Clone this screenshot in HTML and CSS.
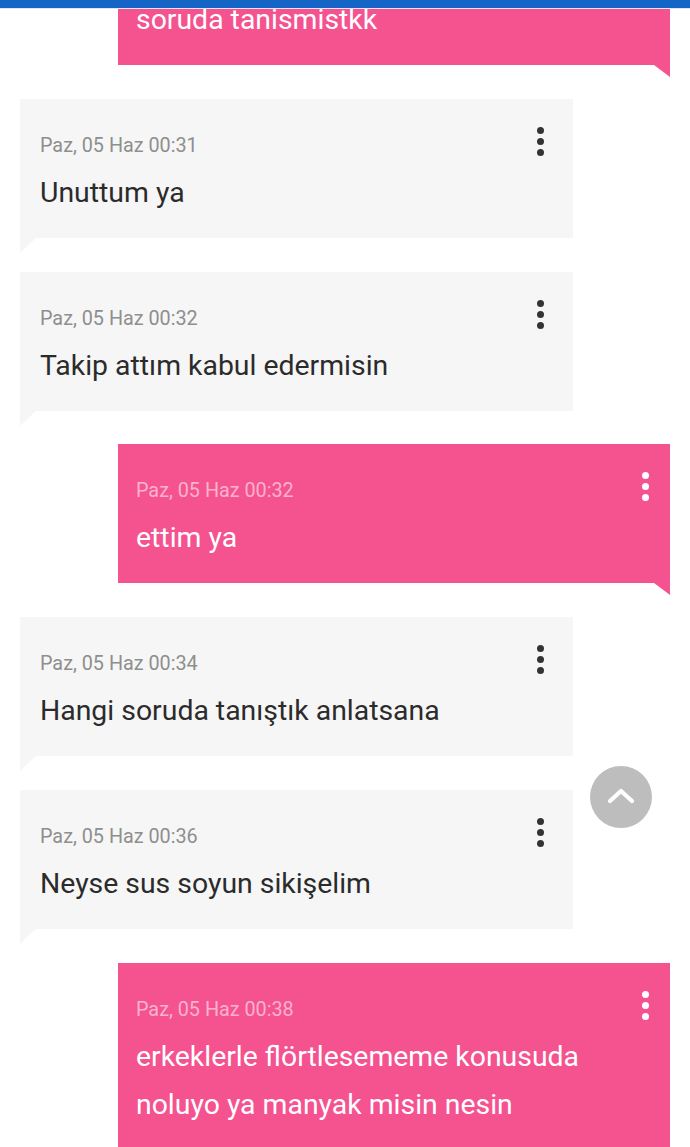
FILE: index.html
```html
<!DOCTYPE html>
<html lang="tr">
<head>
<meta charset="utf-8">
<title>Mesajlar</title>
<link rel="stylesheet" href="styles.css">
</head>
<body>
<div class="topbar"></div>
<main class="thread">
  <div class="msg mine first">
    <div class="meta">Paz, 05 Haz 00:30</div>
    <div class="text">soruda tanismistkk</div>
    <span class="dots"><i></i><i></i><i></i></span>
  </div>
  <div class="msg theirs">
    <div class="meta">Paz, 05 Haz 00:31</div>
    <div class="text">Unuttum ya</div>
    <span class="dots"><i></i><i></i><i></i></span>
  </div>
  <div class="msg theirs">
    <div class="meta">Paz, 05 Haz 00:32</div>
    <div class="text">Takip attım kabul edermisin</div>
    <span class="dots"><i></i><i></i><i></i></span>
  </div>
  <div class="msg mine">
    <div class="meta">Paz, 05 Haz 00:32</div>
    <div class="text">ettim ya</div>
    <span class="dots"><i></i><i></i><i></i></span>
  </div>
  <div class="msg theirs">
    <div class="meta">Paz, 05 Haz 00:34</div>
    <div class="text">Hangi soruda tanıştık anlatsana</div>
    <span class="dots"><i></i><i></i><i></i></span>
  </div>
  <div class="msg theirs">
    <div class="meta">Paz, 05 Haz 00:36</div>
    <div class="text">Neyse sus soyun sikişelim</div>
    <span class="dots"><i></i><i></i><i></i></span>
  </div>
  <div class="msg mine">
    <div class="meta">Paz, 05 Haz 00:38</div>
    <div class="text">erkeklerle flörtlesememe konusuda noluyo ya manyak misin nesin</div>
    <span class="dots"><i></i><i></i><i></i></span>
  </div>
</main>
<button class="to-top" aria-label="Yukarı">
  <svg width="28" height="16" viewBox="0 0 28 16"><path d="M3 13 L14 3 L25 13" fill="none" stroke="#fff" stroke-width="4.2" stroke-linecap="round" stroke-linejoin="round"/></svg>
</button>
</body>
</html>
```

FILE: styles.css
```css
html, body {
  margin: 0;
  padding: 0;
  background: #fff;
  overflow: hidden;
  height: 1147px;
}
body {
  font-family: Roboto, "Noto Sans", "Liberation Sans", sans-serif;
  position: relative;
}
.topbar {
  position: fixed;
  top: 0;
  left: 0;
  right: 0;
  height: 8px;
  background: #1565c6;
  border-bottom: 1px solid #dbe7f5;
  z-index: 5;
}
.thread {
  display: flex;
  flex-direction: column;
  gap: 33.8px;
  padding: 0;
}
.msg {
  position: relative;
  box-sizing: border-box;
  min-height: 139px;
  padding: 33px 60px 21px 20px;
}
.msg.first {
  margin-top: -74px;
}
.msg.theirs {
  margin-left: 20px;
  width: 553px;
  background: #f6f6f6;
}
.msg.mine {
  margin-left: 118px;
  width: 552px;
  background: #f55290;
  padding-left: 18px;
}
.msg::after {
  content: "";
  position: absolute;
  top: 100%;
  width: 0;
  height: 0;
}
.msg.theirs::after {
  left: 0;
  border-top: 15px solid #f6f6f6;
  border-right: 16px solid transparent;
}
.msg.mine::after {
  right: 0;
  border-top: 12px solid #f55290;
  border-left: 16px solid transparent;
}
.meta {
  font-size: 19.8px;
  line-height: 28px;
  color: #8e8e8e;
}
.mine .meta {
  color: #fbb2cd;
}
.text {
  margin-top: 9px;
  font-size: 28.4px;
  line-height: 48px;
  color: #2b2b2b;
}
.mine .text {
  color: #fff;
}
.dots {
  position: absolute;
  top: 28px;
  right: 29px;
  display: flex;
  flex-direction: column;
  gap: 4px;
}
.mine .dots {
  right: 21px;
  top: 28px;
}
.dots i {
  display: block;
  width: 7px;
  height: 7px;
  border-radius: 50%;
  background: #333;
}
.mine .dots i {
  background: #fff;
}
.to-top {
  position: absolute;
  left: 590px;
  top: 766px;
  width: 62px;
  height: 62px;
  border-radius: 50%;
  border: 0;
  padding: 0;
  background: #bdbdbd;
  display: flex;
  align-items: center;
  justify-content: center;
}
.to-top svg {
  display: block;
  margin-top: -2px;
}
```
